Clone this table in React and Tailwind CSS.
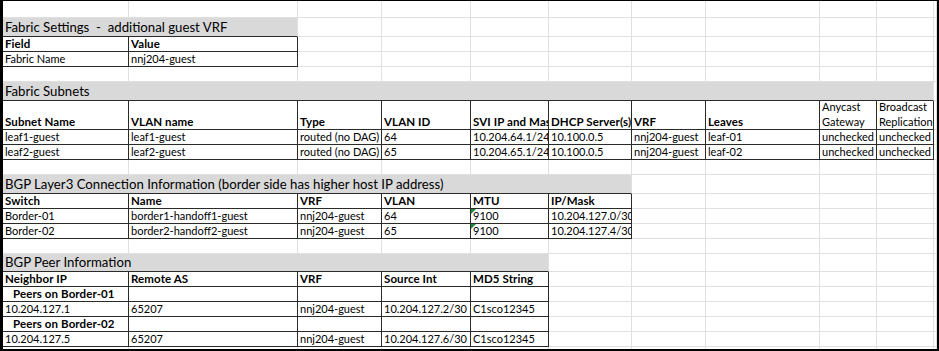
const GRID = 'grid grid-cols-[126px_169px_84px_89px_78px_83px_74px_114px_57px_57px_1fr]'

const DARK_R = 'border-r-[#2a2a2a]'
const LIGHT_R = 'border-r-[#e0e0e0]'
const DARK_B = 'border-b-[#2a2a2a]'
const LIGHT_B = 'border-b-[#e0e0e0]'

const SPAN = { 1: '', 2: 'col-span-2', 5: 'col-span-5', 6: 'col-span-6', 10: 'col-span-10' }

// table areas that get black borders
const tables = [
  { r0: 2, r1: 3, c1: 1 },
  { r0: 6, r1: 8, c1: 9 },
  { r0: 11, r1: 13, c1: 5 },
  { r0: 16, r1: 20, c1: 4 },
]
const inTable = (r, c) => tables.some((t) => r >= t.r0 && r <= t.r1 && c <= t.c1)

const blank = () => []
const band = (text, span) => [{ text, span, band: true }]
const head = (...cols) => cols.map((t) => (typeof t === 'string' ? { text: t, bold: true } : t))
const data = (...cols) => cols.map((t) => (typeof t === 'string' ? { text: t } : t))

const rows = [
  { h: 'h-[17px]', cells: blank() },
  { h: 'h-[19px]', cells: band('Fabric Settings  -  additional guest VRF', 2) },
  { h: 'h-[15px]', cells: head('Field', 'Value') },
  { h: 'h-[15px]', cells: data('Fabric Name', 'nnj204-guest') },
  { h: 'h-[15px]', cells: blank() },
  { h: 'h-[19px]', cells: band('Fabric Subnets', 10) },
  {
    h: 'h-[29px]',
    cells: head(
      'Subnet Name', 'VLAN name', 'Type', 'VLAN ID', 'SVI IP and Mask', 'DHCP Server(s)', 'VRF', 'Leaves',
      { text: 'Anycast Gateway', wrap: true },
      { text: 'Broadcast Replication', wrap: true },
    ),
  },
  { h: 'h-[15px]', cells: data('leaf1-guest', 'leaf1-guest', 'routed (no DAG)', '64', '10.204.64.1/24', '10.100.0.5', 'nnj204-guest', 'leaf-01', 'unchecked', 'unchecked') },
  { h: 'h-[15px]', cells: data('leaf2-guest', 'leaf2-guest', 'routed (no DAG)', '65', '10.204.65.1/24', '10.100.0.5', 'nnj204-guest', 'leaf-02', 'unchecked', 'unchecked') },
  { h: 'h-[15px]', cells: blank() },
  { h: 'h-[19px]', cells: band('BGP Layer3 Connection Information (border side has higher host IP address)', 6) },
  { h: 'h-[15px]', cells: head('Switch', 'Name', 'VRF', 'VLAN', 'MTU', 'IP/Mask') },
  { h: 'h-[15px]', cells: data('Border-01', 'border1-handoff1-guest', 'nnj204-guest', '64', { text: '9100', flag: true }, '10.204.127.0/30') },
  { h: 'h-[15px]', cells: data('Border-02', 'border2-handoff2-guest', 'nnj204-guest', '65', { text: '9100', flag: true }, '10.204.127.4/30') },
  { h: 'h-[15px]', cells: blank() },
  { h: 'h-[18px]', cells: band('BGP Peer Information', 5) },
  { h: 'h-[15px]', cells: head('Neighbor IP', 'Remote AS', 'VRF', 'Source Int', 'MD5 String') },
  { h: 'h-[15px]', cells: [{ text: 'Peers on Border-01', bold: true, indent: true }] },
  { h: 'h-[15px]', cells: data('10.204.127.1', '65207', 'nnj204-guest', '10.204.127.2/30', 'C1sco12345') },
  { h: 'h-[15px]', cells: [{ text: 'Peers on Border-02', bold: true, indent: true }] },
  { h: 'h-[15px]', cells: data('10.204.127.5', '65207', 'nnj204-guest', '10.204.127.6/30', 'C1sco12345') },
]

function Row({ row, r }) {
  // pad out to 11 columns
  const cells = []
  let c = 0
  for (const cell of row.cells) {
    const span = cell.span || 1
    cells.push({ ...cell, c, span })
    c += span
  }
  while (c < 11) {
    cells.push({ text: '', c, span: 1 })
    c += 1
  }

  return (
    <div className={`${GRID} ${row.h}`}>
      {cells.map((cell) => {
        const last = cell.c + cell.span - 1
        const rightDark = inTable(r, last)
        const bottomDark = inTable(r, cell.c) || inTable(r + 1, cell.c)
        return (
          <div
            key={cell.c}
            className={`relative flex items-end overflow-hidden border-r border-b ${SPAN[cell.span]} ${
              rightDark ? DARK_R : LIGHT_R
            } ${bottomDark ? DARK_B : LIGHT_B} ${cell.band ? 'bg-[#d9d9d9]' : ''}`}
          >
            {cell.flag && (
              <span className="absolute top-0 left-0 w-0 h-0 border-t-[5px] border-t-[#1f8a3a] border-r-[5px] border-r-transparent" />
            )}
            {cell.band ? (
              <span className="pl-[2px] text-[13.2px] leading-[17px] whitespace-pre">{cell.text}</span>
            ) : cell.wrap ? (
              <span className="pl-[2px] text-[11px] leading-[15px]">{cell.text}</span>
            ) : cell.bold ? (
              <span
                className={`whitespace-nowrap text-[11.5px] leading-[13px] pb-px font-bold tracking-[0.1px] ${
                  cell.indent ? 'pl-[10px]' : 'pl-[2px]'
                }`}
              >
                {cell.text}
              </span>
            ) : (
              <span className="whitespace-nowrap text-[11px] leading-[13px] pb-px pl-[2px]">{cell.text}</span>
            )}
          </div>
        )
      })}
    </div>
  )
}

export default function App() {
  return (
    <div className="w-[939px] h-[351px] bg-white text-black border-l-[3px] border-t border-r-2 border-b-2 border-black flex flex-col overflow-hidden font-['Lato',sans-serif]">
      {rows.map((row, r) => (
        <Row key={r} row={row} r={r} />
      ))}
      <div className={`${GRID} flex-1`}>
        {Array.from({ length: 11 }).map((_, i) => (
          <div key={i} className="border-r border-r-[#e0e0e0]" />
        ))}
      </div>
    </div>
  )
}
